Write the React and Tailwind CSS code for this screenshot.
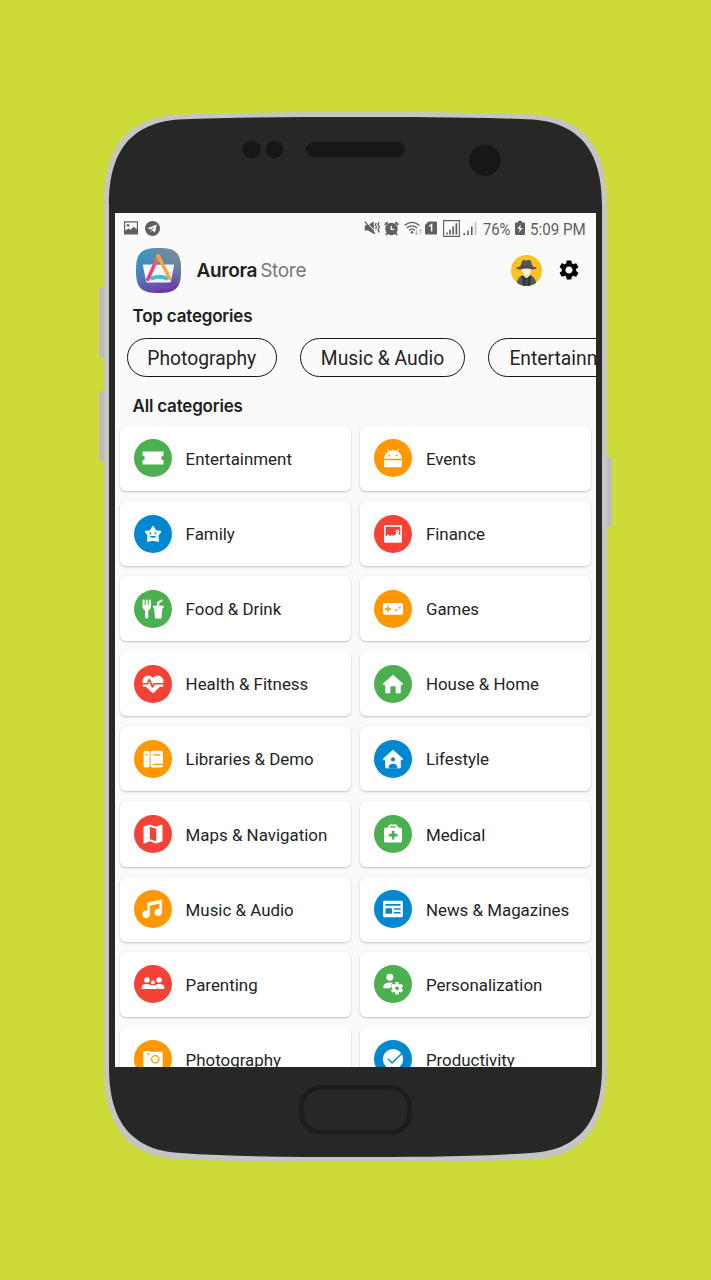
import React from "react";
import { MdSettings } from "react-icons/md";

const GREEN = "#4caf50";
const ORANGE = "#ff9800";
const BLUE = "#0288d1";
const RED = "#f44336";

const icons = {
  ticket: () => <path d="M2 5.8H22V9.7A2.2 2.2 0 0 0 22 14.1V18.2H2V14.1A2.2 2.2 0 0 0 2 9.7Z" />,
  android: (c) => (
    <>
      <path d="M3.5 12.8C3.5 9.6 5.2 7 7.6 5.8L6.3 3.7L7 3.2L8.5 5.4A9 9 0 0 1 15.5 5.4L17 3.2L17.7 3.7L16.4 5.8C18.8 7 20.5 9.6 20.5 12.8Z" />
      <circle cx="8.6" cy="9.6" r=".9" fill={c} />
      <circle cx="15.4" cy="9.6" r=".9" fill={c} />
      <path d="M3.5 14.2H20.5V19.3Q20.5 20.9 19 20.9H5Q3.5 20.9 3.5 19.3Z" />
    </>
  ),
  starFace: (c) => (
    <>
      <path d="M12 5.2L14.3 9.2L18.9 9.9L16.4 13.2L16.8 18.4L12 17.6L7.2 18.4L7.6 13.2L5.1 9.9L9.7 9.2Z" stroke="#fff" strokeWidth="1.8" strokeLinejoin="round" />
      <circle cx="9.6" cy="11.2" r=".9" fill={c} />
      <circle cx="14.4" cy="11.2" r=".9" fill={c} />
      <path d="M9 13.8H15Q14.4 15.6 12 15.6T9 13.8Z" fill={c} />
    </>
  ),
  finance: (c) => (
    <>
      <rect x="3.5" y="3.7" width="17" height="16.6" rx="1" />
      <path d="M5 5.2H19V13.2L17.6 12.3V8.1H14.9V11.6L12.8 13.8L10.8 12.6L9.2 14.4L7.8 12.4L5 14.2Z" fill={c} />
      <circle cx="16.3" cy="9.3" r="1.6" />
      <circle cx="16.3" cy="9.3" r=".6" fill={c} />
    </>
  ),
  food: () => (
    <path d="M3 3A1 1 0 0 0 2 4V9.5C2 11.19 3.03 12.63 4.5 13.22V19.5A1.5 1.5 0 0 0 7.5 19.5V13.22C8.97 12.63 10 11.19 10 9.5V4A1 1 0 0 0 8 4V8A.5.5 0 0 1 7 8V4A1 1 0 0 0 5 4V8A.5.5 0 0 1 4 8V4A1 1 0 0 0 3 3M19.88 3C19.75 3 19.62 3.09 19.5 3.16L16 5.25V9H12V11H13L14 21H20L21 11H22V9H18V6.34L20.5 4.84C21 4.56 21.13 4 20.84 3.5C20.63 3.14 20.26 2.95 19.88 3Z" />
  ),
  gamepad: (c) => (
    <>
      <rect x="2.4" y="6.3" width="19.2" height="11.2" rx="1.8" />
      <path d="M6.5 8.9H8V11.2H10.2V12.6H8V14.9H6.5V12.6H4.2V11.2H6.5Z" fill={c} />
      <circle cx="15" cy="13.3" r="1" fill={c} />
      <circle cx="18.4" cy="10.7" r="1" fill={c} />
    </>
  ),
  heart: () => (
    <path d="M7.5 4A5.5 5.5 0 0 0 2 9.5C2 10 2.09 10.5 2.22 11H6.3L7.57 7.63C7.87 6.83 9.05 6.75 9.43 7.63L11.5 13L12.09 11.58C12.22 11.25 12.57 11 13 11H21.78C21.91 10.5 22 10 22 9.5A5.5 5.5 0 0 0 16.5 4C14.64 4 13 4.93 12 6.34C11 4.93 9.36 4 7.5 4M3 12.5A1 1 0 0 0 2 13.5A1 1 0 0 0 3 14.5H5.44L11 20C12 20.9 12 20.9 13 20L18.56 14.5H21A1 1 0 0 0 22 13.5A1 1 0 0 0 21 12.5H13.4L12.47 14.8C12.07 15.81 10.92 15.67 10.55 14.83L8.5 9.5L7.54 11.83C7.39 12.21 7.05 12.5 6.6 12.5H3Z" />
  ),
  home: () => (
    <path d="M12 3.4L21.2 11.8Q21.6 12.6 20.8 12.7H19.1V20Q19.1 20.6 18.5 20.6H14.8V13.9H9.2V20.6H5.5Q4.9 20.6 4.9 20V12.7H3.2Q2.4 12.6 2.8 11.8Z" stroke="#fff" strokeWidth=".6" strokeLinejoin="round" />
  ),
  homeAccount: (c) => (
    <>
      <path d="M12 3.4L21.2 11.8Q21.6 12.6 20.8 12.7H19.1V20Q19.1 20.6 18.5 20.6H5.5Q4.9 20.6 4.9 20V12.7H3.2Q2.4 12.6 2.8 11.8Z" stroke="#fff" strokeWidth=".6" strokeLinejoin="round" />
      <circle cx="12" cy="12.4" r="2" fill={c} />
      <path d="M8 21.1V19Q8.7 16.6 12 16.6T16 19V21.1Z" fill={c} />
    </>
  ),
  books: (c) => (
    <>
      <rect x="3" y="4.2" width="5.8" height="15.8" rx="1.5" />
      <rect x="9.7" y="4.2" width="11.8" height="15.8" rx="1.5" />
      <path d="M4.8 7.2H7V8.5H4.8ZM12.2 7.5H19.3V8.7H12.2ZM11.8 16.6H21.5V17.6H11.8Z" fill={c} />
    </>
  ),
  map: () => (
    <path fillRule="evenodd" d="M15 19L9 16.89V5L15 7.11ZM20.5 3L20.34 3L15 5.1L9 3L3.36 4.9C3.15 4.97 3 5.15 3 5.38V20.5A.5.5 0 0 0 3.66 20.97L9 18.9L15 21L20.64 19.1C20.85 19 21 18.85 21 18.62V3.5A.5.5 0 0 0 20.5 3Z" />
  ),
  medical: (c) => (
    <>
      <path d="M8.4 6.5V4.8Q8.4 3.8 9.4 3.8H14.6Q15.6 3.8 15.6 4.8V6.5" fill="none" stroke="#fff" strokeWidth="1.6" />
      <rect x="3.5" y="5.8" width="17" height="14.4" rx="1.6" />
      <path d="M10.9 8.9H13.4V11.8H16.3V14.3H13.4V17.2H10.9V14.3H8V11.8H10.9Z" fill={c} />
    </>
  ),
  music: () => (
    <path transform="translate(.2 .3) scale(.96)" d="M21 3V15.5A3.5 3.5 0 1 1 17.5 12C18.04 12 18.55 12.12 19 12.34V6.47L9 8.6V17.5A3.5 3.5 0 1 1 5.5 14C6.04 14 6.55 14.12 7 14.34V6L21 3Z" stroke="#fff" strokeWidth=".5" />
  ),
  news: (c) => (
    <>
      <rect x="2.6" y="4.2" width="18.8" height="15.6" rx="1.2" />
      <path d="M4.8 7.2H19.2V8.8H4.8ZM4.8 11.2H11V16.6H4.8ZM12.8 11.2H19.2V12.6H12.8ZM12.8 14.8H19.2V16.2H12.8Z" fill={c} />
    </>
  ),
  family: () => (
    <>
      <circle cx="6.2" cy="8.1" r="2.6" />
      <circle cx="17.8" cy="8.1" r="2.6" />
      <circle cx="12" cy="10.5" r="1.8" />
      <path d="M1.2 16.8V15.2Q1.2 12 6.2 12Q8.8 12 9.6 13.1H14.4Q15.2 12 17.8 12Q22.8 12 22.8 15.2V16.8H17.2L16.6 15L16.2 16.8Z" />
    </>
  ),
  accountCog: () => (
    <>
      <circle cx="9" cy="5.5" r="3.3" />
      <path d="M2.8 16V14.5C2.8 12.2 5.5 10.6 9 10.6Q10.6 10.6 11.6 10.9A7 7 0 0 0 9.7 16Z" />
      <path
        transform="translate(-5.4 -4) scale(1.18)"
        fillRule="evenodd"
        d="M17 12C16.87 12 16.76 12.09 16.74 12.21L16.55 13.53C16.25 13.66 15.96 13.82 15.7 14L14.46 13.5C14.35 13.5 14.22 13.5 14.15 13.63L13.15 15.36C13.09 15.47 13.11 15.6 13.21 15.68L14.27 16.5V17.5L13.21 18.32C13.12 18.4 13.09 18.53 13.15 18.64L14.15 20.37C14.21 20.5 14.34 20.5 14.46 20.5L15.7 20C15.96 20.18 16.24 20.35 16.55 20.47L16.74 21.79C16.76 21.91 16.86 22 17 22H19C19.11 22 19.22 21.91 19.24 21.79L19.43 20.47C19.73 20.34 20 20.18 20.27 20L21.5 20.5C21.63 20.5 21.76 20.5 21.83 20.37L22.83 18.64C22.89 18.53 22.86 18.4 22.77 18.32L21.7 17.5V16.5L22.76 15.68C22.85 15.6 22.88 15.47 22.82 15.36L21.82 13.63C21.76 13.5 21.63 13.5 21.5 13.5L20.27 14C20 13.82 19.73 13.65 19.42 13.53L19.23 12.21C19.22 12.09 19.11 12 19 12ZM18 15.5A1.5 1.5 0 1 1 18 18.5A1.5 1.5 0 1 1 18 15.5Z"
      />
    </>
  ),
  camera: (c) => (
    <>
      <path d="M3.2 4.4H8.4L9.4 5.1H20Q21.2 5.1 21.2 6.3V18.5Q21.2 19.8 20 19.8H4Q2.8 19.8 2.8 18.5V5Z" />
      <circle cx="14.2" cy="12.2" r="3.5" fill="none" stroke={c} strokeWidth="1.2" />
      <circle cx="7.6" cy="7.3" r=".9" fill={c} />
    </>
  ),
  check: (c) => (
    <>
      <circle cx="12" cy="12.1" r="9.7" />
      <path d="M7.2 11.8L11.2 15.8L20.6 6.6" fill="none" stroke={c} strokeWidth="1.4" />
    </>
  ),
};

const categories = [
  ["Entertainment", GREEN, "ticket"],
  ["Events", ORANGE, "android"],
  ["Family", BLUE, "starFace"],
  ["Finance", RED, "finance"],
  ["Food & Drink", GREEN, "food"],
  ["Games", ORANGE, "gamepad"],
  ["Health & Fitness", RED, "heart"],
  ["House & Home", GREEN, "home"],
  ["Libraries & Demo", ORANGE, "books"],
  ["Lifestyle", BLUE, "homeAccount"],
  ["Maps & Navigation", RED, "map"],
  ["Medical", GREEN, "medical"],
  ["Music & Audio", ORANGE, "music"],
  ["News & Magazines", BLUE, "news"],
  ["Parenting", RED, "family"],
  ["Personalization", GREEN, "accountCog"],
  ["Photography", ORANGE, "camera"],
  ["Productivity", BLUE, "check"],
];

function CategoryCard({ name, color, icon }) {
  return (
    <div className="flex h-[65.2px] items-center rounded-[6px] bg-white pl-[13.8px] shadow-[0_1px_2px_rgba(0,0,0,0.22),0_0_1px_rgba(0,0,0,0.08)]">
      <svg className="size-[38px] shrink-0" viewBox="0 0 38 38">
        <circle cx="19" cy="19" r="19" fill={color} />
        <g transform="translate(6.4 6.4) scale(1.05)" fill="#fff">
          {icons[icon](color)}
        </g>
      </svg>
      <span className="ml-[13.8px] pt-px text-[16.9px] leading-5 whitespace-nowrap text-[#242424]">{name}</span>
    </div>
  );
}

function PhoneBody() {
  return (
    <svg className="absolute inset-0 size-full" viewBox="0 0 711 1280">
      <g fill="#bdbdb9">
        <rect x="99" y="288" width="7" height="70" />
        <rect x="99" y="391" width="7" height="70" />
        <rect x="605" y="457" width="7" height="70" />
      </g>
      <path
        fill="#c5c5c3"
        d="M104 205C104 155 120 120 174 115C235 112 300 112.3 355.500 112.3S476 112 537 115C591 120 607 155 607 205V1066C607 1116 591 1155 537 1159C476 1162 410 1162 355.500 1162S235 1162 174 1159C120 1155 104 1116 104 1066Z"
      />
      <path
        fill="#272727"
        d="M109 205C109 160 124 124 178 119.500C240 117 300 117 355.500 117S471 117 533 119.500C587 124 602 160 602 205V1067C602 1113 586 1150 531 1153C471 1157 410 1157 355.500 1157S240 1157 180 1153C125 1150 109 1113 109 1067Z"
      />
      <g fill="#171717">
        <circle cx="251.700" cy="149.500" r="9" />
        <circle cx="274.500" cy="149.500" r="9" />
        <rect x="306" y="142" width="99" height="15" rx="7.500" />
        <circle cx="485" cy="160.300" r="15.600" />
      </g>
      <rect x="301.500" y="1087.500" width="108" height="45" rx="19" fill="none" stroke="#1c1c1c" strokeWidth="4.500" />
    </svg>
  );
}

function StatusBar() {
  return (
    <div className="flex h-[30px] shrink-0 items-center pl-[9px] text-[17px] leading-5 text-[#5f5f5f]">
      <svg className="h-[14px] w-[14px]" viewBox="0 0 14 14" fill="currentColor">
        <path fillRule="evenodd" d="M0 .3H14V13.500H0ZM1.200 1.500V9.500L4.500 7.500L6.500 8.800L9.500 5.800L12.800 8.200V1.500Z" />
        <circle cx="4" cy="4.300" r="1.300" />
      </svg>
      <svg className="ml-[6.5px] size-[15px]" viewBox="0 0 15 15">
        <circle cx="7.500" cy="7.500" r="7.500" fill="currentColor" />
        <path d="M2.400 7.300L11.800 3.500L10 11.600L7.400 9.600L6 11L5.700 8.500Z" fill="#fafafa" />
        <path d="M5.900 8.500L9.800 5.400L7 8.900L6 10.800Z" fill="#666" />
      </svg>
      <svg className="ml-[204.500px] h-[16px] w-[17px]" viewBox="0 0 17 16" fill="currentColor">
        <path d="M.8 5.200H4L9.800 1.400V14L4 10.500H.8Z" />
        <path d="M1.800 .8L11.800 12.600" stroke="#fafafa" strokeWidth="1" />
        <path d="M.8 1.500L11 13.800" stroke="currentColor" strokeWidth="1.200" />
        <path d="M12.300 3L11.300 5L12.500 7L11.500 9M15.200 2L14 4.500L15.400 7L14 9.500L15.200 12.500" fill="none" stroke="currentColor" strokeWidth="1.300" />
      </svg>
      <svg className="ml-[2.500px] size-[15px]" viewBox="0 0 15 15" fill="currentColor">
        <circle cx="7.500" cy="8" r="6.200" />
        <path d="M.8 4L3.600 1.300M14.200 4L11.400 1.300M3.500 12L2 14M11.500 12L13 14" stroke="currentColor" strokeWidth="1.900" />
        <path d="M7.200 4.800V8.300H10.300" fill="none" stroke="#fafafa" strokeWidth="1.300" />
      </svg>
      <svg className="ml-[5px] h-[15px] w-[18px]" viewBox="0 0 18 15" fill="none" stroke="currentColor" strokeWidth="1.300">
        <path d="M.5 4.500Q8 -1.700 15.500 4.500M2.800 7Q8 2.700 13.200 7M5 9.400Q8 7 11 9.400" />
        <circle cx="8" cy="11.300" r="1.300" fill="currentColor" stroke="none" />
        <path d="M12.500 9V13.500M11 12L12.500 13.800L14 12M16.500 13V8.500M15 10L16.500 8.300L18 10" stroke="#b8b8b8" strokeWidth=".9" />
      </svg>
      <svg className="ml-[3.500px] h-[14px] w-[12px]" viewBox="0 0 12 14">
        <path d="M3.500 .5H11Q12 .5 12 1.500V12.500Q12 13.500 11 13.500H1Q0 13.500 0 12.500V4Z" fill="currentColor" />
        <path d="M4.300 5L6.600 3.800V10.600" fill="none" stroke="#fafafa" strokeWidth="1.500" />
      </svg>
      <svg className="ml-[6px] h-[17px] w-[17px]" viewBox="0 0 17 17" fill="none" stroke="currentColor">
        <path d="M.6 .6H16.400V16.400H.6Z" strokeWidth="1.100" />
        <path d="M4 14.500V12.500M7 14.500V9.800M10.200 14.500V6.500M13.400 14.500V3.200" strokeWidth="1.700" />
      </svg>
      <svg className="ml-[3px] h-[15px] w-[14px]" viewBox="0 0 14 15" fill="none" stroke="currentColor" strokeWidth="1.600">
        <path d="M1.200 14V12M5 14V9.500M8.800 14V5.500" />
        <path d="M12.600 14V1" stroke="#bdbdbd" />
      </svg>
      <span className="ml-[5.500px] w-[32.500px] origin-left scale-x-[.87] pt-px whitespace-nowrap">76%</span>
      <svg className="h-[14px] w-[10px] shrink-0" viewBox="0 0 10 14">
        <path d="M3 0H7V1.500H9Q10 1.500 10 2.500V13Q10 14 9 14H1Q0 14 0 13V2.500Q0 1.500 1 1.500H3Z" fill="currentColor" />
        <path d="M5.800 3.500L2.200 7.800H4.700L4 11.500L7.800 7H5.300Z" fill="#fafafa" />
      </svg>
      <span className="ml-[4.500px] origin-left scale-x-[.89] pt-px whitespace-nowrap">5:09 PM</span>
    </div>
  );
}

function AppLogo() {
  return (
    <svg className="size-[45px]" viewBox="0 0 45 45">
      <defs>
        <linearGradient id="logoBg" x1=".3" y1="0" x2=".65" y2="1">
          <stop offset="0" stopColor="#3c98c0" />
          <stop offset=".5" stopColor="#4a80ba" />
          <stop offset="1" stopColor="#7430a0" />
        </linearGradient>
        <linearGradient id="logoTint" x1="1" y1="0" x2=".5" y2=".5">
          <stop offset="0" stopColor="#8a8a88" />
          <stop offset="1" stopColor="#8a8a88" stopOpacity="0" />
        </linearGradient>
        <linearGradient id="logoLeft" x1="1" y1="0" x2="0" y2="1">
          <stop offset="0" stopColor="#f47b52" />
          <stop offset=".5" stopColor="#ee4478" />
          <stop offset="1" stopColor="#d8408c" />
        </linearGradient>
      </defs>
      <path d="M0 22.500C0 5 5 0 22.500 0S45 5 45 22.500S40 45 22.500 45S0 40 0 22.500Z" fill="url(#logoBg)" />
      <path d="M0 22.500C0 5 5 0 22.500 0S45 5 45 22.500S40 45 22.500 45S0 40 0 22.500Z" fill="url(#logoTint)" />
      <path d="M2 36Q12 33 22 38T43 34" fill="none" stroke="#6a5fc0" strokeWidth="1.500" opacity=".6" />
      <path d="M7.500 16.500H37.500Q38.300 16.500 38.100 17.500L35 33Q34.800 34.500 33.300 34.500H11.700Q10.200 34.500 10 33L6.900 17.500Q6.700 16.500 7.500 16.500Z" fill="#f7f7fb" />
      <path d="M22.500 9L18.700 16.500H26.300Z" fill="#5d8bb5" />
      <path d="M14.500 31Q22.500 26.500 32 31" fill="none" stroke="#3fc0d4" strokeWidth="3.800" />
      <path d="M22.300 8L33.800 30.500" stroke="#f9a53b" strokeWidth="3.500" strokeLinecap="round" />
      <path d="M22.300 8L11.800 31.500" stroke="url(#logoLeft)" strokeWidth="3.500" strokeLinecap="round" />
      <path d="M22.300 8L24.300 12" stroke="#f9a53b" strokeWidth="3.500" strokeLinecap="round" />
    </svg>
  );
}

function Avatar() {
  return (
    <svg className="size-[31px]" viewBox="0 0 31 31">
      <defs>
        <clipPath id="avatarClip"><circle cx="15.500" cy="15.500" r="15.500" /></clipPath>
      </defs>
      <g clipPath="url(#avatarClip)">
        <rect width="31" height="31" fill="#f8c220" />
        <path d="M5.500 31Q5.500 23 11 20.500L15.500 22L20 20.500Q25.500 23 25.500 31Z" fill="#535861" />
        <path d="M12.500 17H18.500V21L15.500 24L12.500 21Z" fill="#f3d9b4" />
        <path d="M11 12H20V16Q19.500 19.500 15.500 20Q11.500 19.500 11 16Z" fill="#fbeed8" />
        <path d="M11 20L15.500 23.500L20 20L19 31H12Z" fill="#30343a" />
        <path d="M15.500 23L17 25L16.500 31H14.500L14 25Z" fill="#3d5148" />
        <path d="M5 12.500Q9 12 10 10Q10.500 5 13 4.800Q15.500 6 18 4.800Q20.500 5 21 10Q22 12 26 12.500Q25 15 20.500 14.200Q15.500 12.800 10.500 14.200Q6 15 5 12.500Z" fill="#575658" />
        <path d="M10 10Q15.500 12 21 10V11.800Q15.500 13.500 10 11.800Z" fill="#4a494b" />
      </g>
    </svg>
  );
}

function Chip({ label, className }) {
  return (
    <div className={`flex h-[39px] shrink-0 items-center justify-center rounded-full border-[1.5px] border-[#151515] pt-[3px] text-[19.3px] whitespace-nowrap text-[#242424] ${className}`}>
      {label}
    </div>
  );
}

export default function App() {
  return (
    <div className="relative h-[1280px] w-[711px] overflow-hidden bg-[#cddc39] pt-[213px] pl-[115px] font-['Roboto',sans-serif]">
      <PhoneBody />
      <main className="relative flex h-[854px] w-[481px] flex-col overflow-hidden bg-[#fafafa]">
        <StatusBar />
        <header className="flex h-[54px] shrink-0 items-center pr-[15px] pl-[21px]">
          <AppLogo />
          <div className="ml-[15.500px] flex items-baseline gap-[3px] pt-[2px] font-['Inter',sans-serif] text-[19px] tracking-[-0.3px]">
            <span className="font-semibold text-[#202020]">Aurora</span>
            <span className="text-[#777]">Store</span>
          </div>
          <div className="ml-auto flex items-center gap-[15px]">
            <Avatar />
            <MdSettings className="size-[24px] text-black" />
          </div>
        </header>
        <h2 className="mt-[7px] shrink-0 pl-[17.500px] font-['Inter',sans-serif] text-[17px] leading-6 font-semibold tracking-[-0.2px] text-[#202020]">Top categories</h2>
        <div className="mt-[10px] flex shrink-0 gap-[22.800px] pl-[11.500px]">
          <Chip label="Photography" className="w-[150.500px]" />
          <Chip label="Music & Audio" className="w-[165.500px]" />
          <Chip label="Entertainment" className="w-[164px]" />
        </div>
        <h2 className="mt-[17px] shrink-0 pl-[17.500px] font-['Inter',sans-serif] text-[17px] leading-6 font-semibold tracking-[-0.2px] text-[#202020]">All categories</h2>
        <div className="mt-[7.800px] grid shrink-0 grid-cols-2 gap-x-[9.600px] gap-y-[9.950px] pr-[5px] pl-[5px]">
          {categories.map(([name, color, icon]) => (
            <CategoryCard key={name} name={name} color={color} icon={icon} />
          ))}
        </div>
      </main>
    </div>
  );
}
